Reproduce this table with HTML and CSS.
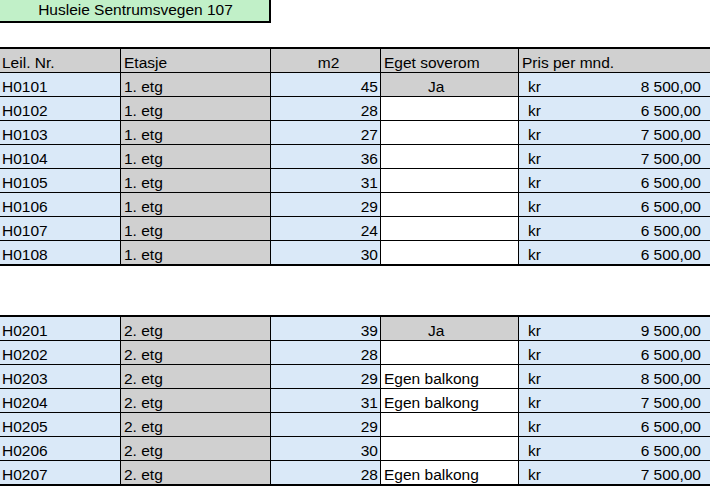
FILE: index.html
```html
<!DOCTYPE html>
<html lang="no">
<head>
<meta charset="utf-8">
<title>Husleie Sentrumsvegen 107</title>
<link rel="stylesheet" href="styles.css">
</head>
<body>
<div class="title">Husleie Sentrumsvegen 107</div>

<div class="sheet first">
  <div class="row head">
    <div class="c c1">Leil. Nr.</div>
    <div class="c c2">Etasje</div>
    <div class="c c3 center">m2</div>
    <div class="c c4">Eget soverom</div>
    <div class="c c5 hp">Pris per mnd.</div>
  </div>
  <div class="row"><div class="c c1">H0101</div><div class="c c2">1. etg</div><div class="c c3">45</div><div class="c c4 ja">Ja</div><div class="c c5"><span>kr</span><span>8 500,00</span></div></div>
  <div class="row"><div class="c c1">H0102</div><div class="c c2">1. etg</div><div class="c c3">28</div><div class="c c4"></div><div class="c c5"><span>kr</span><span>6 500,00</span></div></div>
  <div class="row"><div class="c c1">H0103</div><div class="c c2">1. etg</div><div class="c c3">27</div><div class="c c4"></div><div class="c c5"><span>kr</span><span>7 500,00</span></div></div>
  <div class="row"><div class="c c1">H0104</div><div class="c c2">1. etg</div><div class="c c3">36</div><div class="c c4"></div><div class="c c5"><span>kr</span><span>7 500,00</span></div></div>
  <div class="row"><div class="c c1">H0105</div><div class="c c2">1. etg</div><div class="c c3">31</div><div class="c c4"></div><div class="c c5"><span>kr</span><span>6 500,00</span></div></div>
  <div class="row"><div class="c c1">H0106</div><div class="c c2">1. etg</div><div class="c c3">29</div><div class="c c4"></div><div class="c c5"><span>kr</span><span>6 500,00</span></div></div>
  <div class="row"><div class="c c1">H0107</div><div class="c c2">1. etg</div><div class="c c3">24</div><div class="c c4"></div><div class="c c5"><span>kr</span><span>6 500,00</span></div></div>
  <div class="row last"><div class="c c1">H0108</div><div class="c c2">1. etg</div><div class="c c3">30</div><div class="c c4"></div><div class="c c5"><span>kr</span><span>6 500,00</span></div></div>
</div>

<div class="sheet second">
  <div class="row"><div class="c c1">H0201</div><div class="c c2">2. etg</div><div class="c c3">39</div><div class="c c4 ja">Ja</div><div class="c c5"><span>kr</span><span>9 500,00</span></div></div>
  <div class="row"><div class="c c1">H0202</div><div class="c c2">2. etg</div><div class="c c3">28</div><div class="c c4"></div><div class="c c5"><span>kr</span><span>6 500,00</span></div></div>
  <div class="row"><div class="c c1">H0203</div><div class="c c2">2. etg</div><div class="c c3">29</div><div class="c c4">Egen balkong</div><div class="c c5"><span>kr</span><span>8 500,00</span></div></div>
  <div class="row"><div class="c c1">H0204</div><div class="c c2">2. etg</div><div class="c c3">31</div><div class="c c4">Egen balkong</div><div class="c c5"><span>kr</span><span>7 500,00</span></div></div>
  <div class="row"><div class="c c1">H0205</div><div class="c c2">2. etg</div><div class="c c3">29</div><div class="c c4"></div><div class="c c5"><span>kr</span><span>6 500,00</span></div></div>
  <div class="row"><div class="c c1">H0206</div><div class="c c2">2. etg</div><div class="c c3">30</div><div class="c c4"></div><div class="c c5"><span>kr</span><span>6 500,00</span></div></div>
  <div class="row last"><div class="c c1">H0207</div><div class="c c2">2. etg</div><div class="c c3">28</div><div class="c c4">Egen balkong</div><div class="c c5"><span>kr</span><span>7 500,00</span></div></div>
</div>
</body>
</html>
```

FILE: styles.css
```css
html, body {
  margin: 0;
  padding: 0;
  background: #ffffff;
}
body {
  font-family: "Liberation Sans", Arial, sans-serif;
  font-size: 15.5px;
  color: #000000;
  width: 710px;
  height: 487px;
  overflow: hidden;
}
.title {
  box-sizing: border-box;
  width: 271px;
  height: 23px;
  background: #c1f0c8;
  border-right: 2px solid #000;
  border-bottom: 2px solid #000;
  text-align: center;
  line-height: 20px;
  padding-left: 2px;
}
.sheet {
  border-top: 2px solid #000;
}
.sheet.first {
  margin-top: 24px;
}
.sheet.second {
  margin-top: 49px;
}
.row {
  box-sizing: border-box;
  display: grid;
  grid-template-columns: 121px 150px 110px 138px 1fr;
  height: 24px;
  border-bottom: 1px solid #000;
}
.row.last {
  height: 25px;
  border-bottom: 2px solid #000;
}
.c {
  box-sizing: border-box;
  border-right: 1px solid #000;
  display: flex;
  align-items: flex-end;
  line-height: 18px;
  padding: 0 2px 0 2px;
  white-space: nowrap;
  overflow: hidden;
}
.c1 { background: #dae9f8; padding-left: 2px; }
.c2 { background: #d0d0d0; padding-left: 3px; }
.c3 { background: #dae9f8; justify-content: flex-end; padding-right: 2px; }
.c4 { background: #ffffff; padding-left: 3px; }
.c4.ja { background: #d0d0d0; padding-left: 47px; }
.c5 {
  background: #dae9f8;
  border-right: none;
  justify-content: space-between;
  padding-left: 9px;
  padding-right: 9px;
}
.head .c { background: #d0d0d0; }
.c3.center { justify-content: center; padding-left: 8px; }
.c5.hp { justify-content: flex-start; padding-left: 3px; }
```
